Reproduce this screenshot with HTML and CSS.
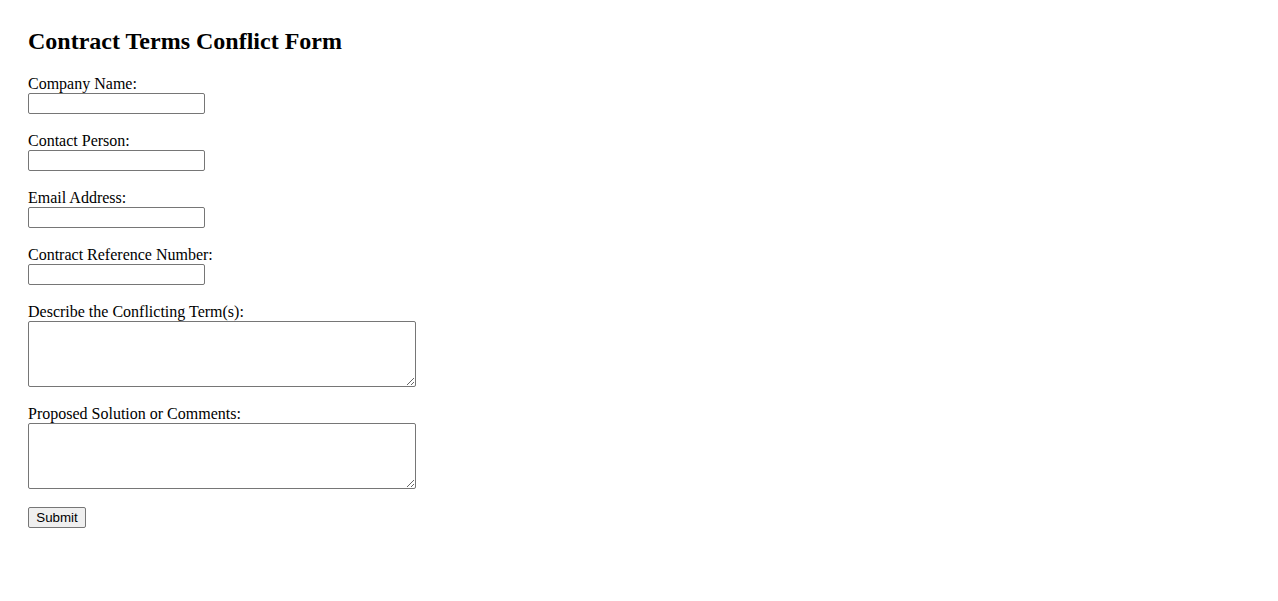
FILE: index.html
```html
<!DOCTYPE html>
<html lang="en">
<head>
<meta charset="utf-8">
<title>Contract Terms Conflict Form</title>
<link rel="stylesheet" href="styles.css">
</head>
<body>
<main class="page">
  <h2 class="title">Contract Terms Conflict Form</h2>
  <form class="form">
    <div class="field">
      <label class="label" for="company">Company Name:</label>
      <input class="input" type="text" id="company">
    </div>
    <div class="field">
      <label class="label" for="contact">Contact Person:</label>
      <input class="input" type="text" id="contact">
    </div>
    <div class="field">
      <label class="label" for="email">Email Address:</label>
      <input class="input" type="email" id="email">
    </div>
    <div class="field">
      <label class="label" for="ref">Contract Reference Number:</label>
      <input class="input" type="text" id="ref">
    </div>
    <div class="field">
      <label class="label" for="terms">Describe the Conflicting Term(s):</label>
      <textarea class="area" id="terms"></textarea>
    </div>
    <div class="field">
      <label class="label" for="comments">Proposed Solution or Comments:</label>
      <textarea class="area" id="comments"></textarea>
    </div>
    <button class="submit" type="submit">Submit</button>
  </form>
</main>
</body>
</html>
```

FILE: styles.css
```css
html, body {
  background: #ffffff;
}
body {
  margin: 8px;
  font-family: "Liberation Serif", "Times New Roman", serif;
  font-size: 16px;
  color: #000000;
}
.page {
  padding: 20px;
}
.title {
  margin: 0 0 20px 0;
  font-size: 24px;
  font-weight: bold;
  line-height: normal;
}
.form {
  margin: 0;
}
.field {
  margin-bottom: 18px;
}
.label {
  display: block;
  line-height: normal;
}
.input {
  display: block;
  box-sizing: border-box;
  width: 177px;
  height: 21px;
  margin: 0;
  padding: 1px 2px;
  border: 1px solid #767676;
  border-radius: 2px;
  background: #ffffff;
  font-family: "Liberation Sans", Arial, sans-serif;
  font-size: 13.33px;
}
.area {
  display: block;
  box-sizing: border-box;
  width: 388px;
  height: 66px;
  margin: 0;
  padding: 2px;
  border: 1px solid #767676;
  border-radius: 2px;
  background: #ffffff;
  font-family: "Liberation Mono", monospace;
  font-size: 13.33px;
}
.submit {
  display: block;
  box-sizing: border-box;
  width: 58px;
  height: 21px;
  margin: 0;
  padding: 1px 6px;
  border: 1px solid #767676;
  border-radius: 2px;
  background: #efefef;
  color: #000000;
  font-family: "Liberation Sans", Arial, sans-serif;
  font-size: 13.33px;
}
```
